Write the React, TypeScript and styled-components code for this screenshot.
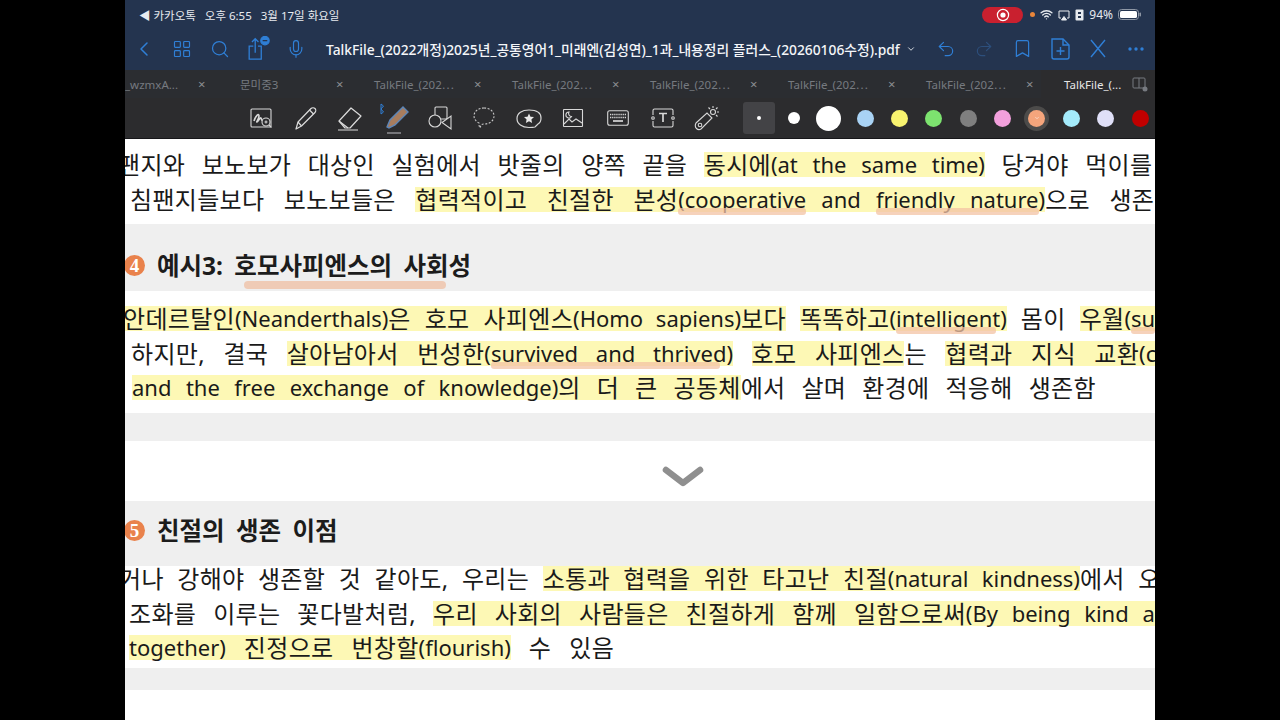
import React from "react";
import styled, { createGlobalStyle } from "styled-components";
import { ChevronLeft, LayoutGrid, Search, Mic, Undo2, Redo2, Bookmark, Wifi, ChevronDown } from "lucide-react";

const GlobalStyle = createGlobalStyle`
  html, body {
    margin: 0;
    background: #000;
    overflow: hidden;
  }
`;

const Page = styled.div`
  width: 1030px;
  height: 720px;
  margin-left: 125px;
  overflow: hidden;
  display: flex;
  flex-direction: column;
  background: #fff;
  font-family: "Noto Sans", "Noto Sans CJK KR", sans-serif;
`;

const Header = styled.div`
  height: 70px;
  background: #24344f;
  flex: none;
  color: #fff;
`;

const StatusBar = styled.div`
  height: 29px;
  display: flex;
  align-items: center;
  padding: 0 14px;
  font-size: 11.5px;
  color: #e8ebf0;
  gap: 9px;
`;

const StatusRight = styled.div`
  margin-left: auto;
  display: flex;
  align-items: center;
  gap: 5px;
  font-size: 12px;
`;

const RecPill = styled.div`
  width: 41px;
  height: 16px;
  border-radius: 8px;
  background: #c9202f;
  display: flex;
  align-items: center;
  justify-content: center;
  margin-right: 2px;
`;

const OrangeDot = styled.span`
  width: 5px;
  height: 5px;
  border-radius: 50%;
  background: #e8853a;
`;

const NavRow = styled.div`
  height: 39px;
  display: flex;
  align-items: center;
  color: #2f7fd6;
`;

const NavSlot = styled.div<{ $dim?: boolean }>`
  width: 38px;
  height: 38px;
  flex: none;
  display: flex;
  align-items: center;
  justify-content: center;
  color: ${(p) => (p.$dim ? "#2d4f7c" : "#2f7fd6")};
`;

const NavLeft = styled.div`
  display: flex;
  margin-right: 11px;
`;

const Title = styled.div`
  flex: none;
  width: 601px;
  color: #f4f6f9;
  font-size: 13.8px;
  font-weight: 500;
  white-space: nowrap;
  display: flex;
  align-items: center;
  gap: 6px;
  svg {
    flex: none;
  }
`;

const TabRow = styled.div`
  height: 28px;
  background: #2b2d31;
  display: flex;
  flex: none;
  overflow: hidden;
`;

const Tab = styled.div<{ $width: number; $inset?: number }>`
  width: ${(p) => p.$width}px;
  flex: none;
  display: flex;
  align-items: center;
  justify-content: space-between;
  padding: 0 5px 0 ${(p) => p.$inset ?? 23}px;
  box-sizing: border-box;
  font-size: 11.5px;
  color: #767a80;
  white-space: nowrap;
`;

const ActiveTab = styled.div`
  flex: 1;
  display: flex;
  align-items: center;
  background: #2c2c2e;
  font-size: 11.5px;
  color: #e6e6e6;
  padding-left: 23px;
  white-space: nowrap;
  gap: 11px;
`;

const CloseMark = styled.span`
  color: #8a8d92;
  font-size: 13px;
  width: 10px;
`;

const ToolBar = styled.div`
  height: 41px;
  background: #2c2c2e;
  border-bottom: 1px solid #17171a;
  box-sizing: border-box;
  display: flex;
  flex: none;
  align-items: center;
  padding-left: 114px;
`;

const ToolSlot = styled.div`
  width: 44.6px;
  flex: none;
  display: flex;
  align-items: center;
  justify-content: center;
`;

const ToolDivider = styled.div`
  width: 1px;
  height: 26px;
  background: #3a3a3d;
  margin: 0 12px 0 1px;
`;

const SelectedSlot = styled.div`
  width: 32px;
  height: 32px;
  border-radius: 3px;
  background: #434346;
  display: flex;
  flex: none;
  align-items: center;
  justify-content: center;
  margin-right: 2px;
`;

const SwatchSlot = styled.div<{ $after?: number }>`
  width: 34.4px;
  flex: none;
  display: flex;
  align-items: center;
  justify-content: center;
  margin-right: ${(p) => p.$after ?? 0}px;
`;

const Swatch = styled.span<{ $size: number; $color: string; $ring?: boolean }>`
  width: ${(p) => p.$size}px;
  height: ${(p) => p.$size}px;
  border-radius: 50%;
  background: ${(p) => p.$color};
  display: flex;
  align-items: center;
  justify-content: center;
  box-shadow: ${(p) => (p.$ring ? "0 0 0 4px #4c4b4a" : "none")};
`;

const Band = styled.div<{ $height: number }>`
  height: ${(p) => p.$height}px;
  flex: none;
  background: #efefef;
`;

const HeadingBand = styled(Band)<{ $top: number }>`
  padding-top: ${(p) => p.$top}px;
  box-sizing: border-box;
  display: flex;
  align-items: flex-start;
`;

const Badge = styled.span`
  width: 21px;
  height: 21px;
  border-radius: 50%;
  background: #e9824c;
  color: #fff;
  font-family: "Liberation Serif", serif;
  font-weight: 700;
  font-size: 19px;
  display: flex;
  align-items: center;
  justify-content: center;
  margin-left: -1px;
  margin-top: 3px;
  flex: none;
`;

const HeadingText = styled.div`
  margin-left: 12px;
  font-size: 24.5px;
  font-weight: 700;
  color: #1c1c1c;
  line-height: 28px;
  white-space: nowrap;
  word-spacing: 5px;
`;

const Section = styled.div<{ $height: number; $top: number }>`
  height: ${(p) => p.$height}px;
  box-sizing: border-box;
  flex: none;
  background: #fff;
  overflow: hidden;
  & > :first-child {
    margin-top: ${(p) => p.$top}px;
  }
`;

const ChevronSection = styled(Section)`
  display: flex;
  color: #8f8f8f;
  padding-left: 537px;
`;

const Latin = styled.span`
  font-size: 22px;
  letter-spacing: 0;
  vertical-align: 1px;
`;

const Line = styled.div<{ $indent: number; $spacing: number; $latin: number }>`
  height: 34.7px;
  line-height: 34.7px;
  margin-left: ${(p) => p.$indent}px;
  font-size: 24px;
  color: #1a1a1a;
  white-space: nowrap;
  word-spacing: ${(p) => p.$spacing}px;
  letter-spacing: 0.3px;
  ${Latin} {
    word-spacing: ${(p) => p.$latin}px;
  }
`;

const Mark = styled.span`
  background: linear-gradient(#fdf8b5, #fdf8b5) 0 50% / 100% 25px no-repeat;
  padding: 5px 0;
`;

const Underlined = styled.span<{ $trim?: number }>`
  position: relative;
  &::after {
    content: "";
    position: absolute;
    left: 0;
    right: ${(p) => p.$trim ?? 0}px;
    bottom: -1px;
    height: 7px;
    border-radius: 3px;
    background: #f3c3a4;
    opacity: 0.75;
  }
`;

const HeadingUnderlined = styled.span`
  position: relative;
  &::after {
    content: "";
    position: absolute;
    left: 10px;
    right: 25px;
    bottom: -7px;
    height: 8px;
    border-radius: 4px;
    background: #efc4ac;
    opacity: 0.85;
  }
`;

const InkIcon = () => (
  <svg width="24" height="24" viewBox="0 0 24 24" fill="none" stroke="#d8d8d8" strokeWidth="1.1">
    <rect x="2" y="3" width="20" height="18" rx="1" />
    <path d="M5 15c2-6 5-8 5-5s-3 6-2 6 3-5 4-4 0 3 2 2" strokeWidth="1.6" />
    <circle cx="17" cy="16" r="4" fill="#2c2c2e" />
    <path d="M17 14.5v3M15.5 16h3M20 19l2.5 2.5" />
  </svg>
);

const PencilIcon = () => (
  <svg width="26" height="26" viewBox="0 0 26 26" fill="none" stroke="#dcdcdc" strokeWidth="1.2" strokeLinejoin="round">
    <path d="M3 24l2-7L18 3.5c1-1 3-1 4 0s1 3 0 4L8.500 21z" />
    <path d="M5 17l3.500 4M16.500 5l4 4" />
  </svg>
);

const EraserIcon = () => (
  <svg width="28" height="26" viewBox="0 0 28 26" fill="none" stroke="#dcdcdc" strokeWidth="1.2" strokeLinejoin="round">
    <path d="M3 16L15 3l10 8-11 12H9z" />
    <path d="M3 16l9 7M2 25h20" />
  </svg>
);

const HighlighterIcon = () => (
  <svg width="32" height="32" viewBox="0 0 32 32" fill="none">
    <path d="M2 2l2.500 2L2 7V2zM2 12V7l2.500 3z" stroke="#2f7fd6" strokeWidth="1" />
    <path d="M8 25l3-7L24 5l5 5-13 13-6 3z" fill="#a87d5e" stroke="#5d86b8" strokeWidth="1.4" />
    <path d="M8 31h14" stroke="#8a8a8e" strokeWidth="1.6" />
  </svg>
);

const ShapesIcon = () => (
  <svg width="26" height="26" viewBox="0 0 26 26" fill="none" stroke="#d8d8d8" strokeWidth="1.1">
    <rect x="8" y="2" width="12" height="12" rx="1" />
    <circle cx="8" cy="16" r="6" fill="#2c2c2e" />
    <path d="M24 11v13l-9-6.500z" fill="#2c2c2e" />
  </svg>
);

const LassoIcon = () => (
  <svg width="24" height="24" viewBox="0 0 24 24" fill="none" stroke="#c8c8c8" strokeWidth="1.1" strokeDasharray="2 1.6">
    <path d="M12 2c6 0 10 3.500 10 8s-4 8-10 8c-1 0-2 0-3 1l-1 3c-1-2-1-3-1-5-3-1.500-5-4-5-7 0-4.500 4-8 10-8z" />
  </svg>
);

const StickerIcon = () => (
  <svg width="28" height="24" viewBox="0 0 28 24" fill="none" stroke="#d8d8d8" strokeWidth="1.2">
    <path d="M14 4c8 0 12 3 12 8 0 3-1 5-3 6l-3 3c-2 .5-4 .5-6 .5C7 21.500 2 18 2 12.500S7 4 14 4z" />
    <path d="M14 7.500l1.500 3.200 3.500.4-2.600 2.400.7 3.500-3.100-1.800-3.100 1.800.7-3.500L9 11.100l3.500-.4z" fill="#e8e8e8" stroke="none" />
  </svg>
);

const ImageIcon = () => (
  <svg width="22" height="20" viewBox="0 0 22 20" fill="none" stroke="#d8d8d8" strokeWidth="1.1">
    <rect x="1.500" y="1.500" width="19" height="17" rx="0.500" />
    <path d="M2 16l5-5 3 3 4-3 6 4" />
    <path d="M7 4a3 3 0 1 0 2.500 4.500A3 3 0 0 1 7 4z" />
  </svg>
);

const KeyboardIcon = () => (
  <svg width="22" height="16" viewBox="0 0 22 16" fill="none" stroke="#d8d8d8">
    <rect x="0.700" y="0.700" width="20.600" height="14.600" rx="2" strokeWidth="1.100" />
    <path d="M3 4.500h16M3 7.500h16" strokeWidth="1.700" strokeDasharray="1.300 .8" />
    <path d="M6 11h10" strokeWidth="1.700" />
  </svg>
);

const TextBoxIcon = () => (
  <svg width="24" height="20" viewBox="0 0 24 20" fill="none" stroke="#d8d8d8" strokeWidth="1.100">
    <path d="M2 7V2.500C2 1.500 2.500 1 3.500 1h17c1 0 1.500.5 1.500 1.500V7M2 13v4.500c0 1 .5 1.500 1.500 1.500h17c1 0 1.500-.5 1.500-1.500V13" />
    <circle cx="2" cy="10" r="1.300" />
    <circle cx="22" cy="10" r="1.300" />
    <path d="M8 5.500h8M12 5.500V14" strokeWidth="1.700" />
  </svg>
);

const LaserIcon = () => (
  <svg width="28" height="26" viewBox="0 0 28 26" fill="none" stroke="#d8d8d8" strokeWidth="1.100">
    <path d="M3 18L14 8l5 5L8 24c-1.500 1-3 1-4.500-.5S2 20 3 18z" />
    <circle cx="7" cy="20" r="1.800" />
    <circle cx="20" cy="7" r="2.500" />
    <path d="M20 1v2M26 7h-2M24.500 2.500L23 4M24.500 11.500L23 10M15.500 2.500L17 4" />
  </svg>
);

const ShareIcon = () => (
  <svg width="26" height="26" viewBox="0 0 28 28" fill="none" stroke="#2f7fd6" strokeWidth="1.400">
    <path d="M9 11H4.500v14h13V11H14" />
    <path d="M11 18V3M7.500 6.500L11 3l3.500 3.500" />
    <circle cx="21.500" cy="5" r="4.500" fill="#2f7fd6" />
    <path d="M19 5h5" stroke="#24344f" />
  </svg>
);

const PagePlusIcon = () => (
  <svg width="24" height="24" viewBox="0 0 24 24" fill="none" stroke="#2f7fd6" strokeWidth="1.400">
    <path d="M4 2h11l6 6v12c0 1-.8 2-2 2H6c-1 0-2-1-2-2V2z" />
    <path d="M15 2v6h6M12.500 10v8M8.500 14h8" />
  </svg>
);

const CrossIcon = () => (
  <svg width="20" height="20" viewBox="0 0 20 20" fill="none" stroke="#2f7fd6" strokeWidth="1.400">
    <path d="M3 1l14 17M17 1L3 18" />
  </svg>
);

const DotsIcon = () => (
  <svg width="18" height="6" viewBox="0 0 18 6" fill="#2f7fd6">
    <circle cx="3" cy="3" r="1.700" />
    <circle cx="9" cy="3" r="1.700" />
    <circle cx="15" cy="3" r="1.700" />
  </svg>
);

const RecIcon = () => (
  <svg width="14" height="14" viewBox="0 0 14 14" fill="none">
    <circle cx="7" cy="7" r="5.600" stroke="#fff" strokeWidth="1.200" />
    <circle cx="7" cy="7" r="2.600" fill="#fff" />
  </svg>
);

const AirplayIcon = () => (
  <svg width="12" height="12" viewBox="0 0 12 12" fill="none" stroke="#e8ebf0" strokeWidth="1">
    <path d="M3 9H1V2h10v7H9" />
    <path d="M3.500 11L6 7.500 8.500 11z" fill="#e8ebf0" />
  </svg>
);

const RotationLockIcon = () => (
  <svg width="9" height="12" viewBox="0 0 9 12" fill="#e8ebf0">
    <rect x="0.500" y="0.500" width="8" height="11" rx="1" />
    <rect x="3" y="3" width="3" height="2" fill="#24344f" />
    <rect x="3" y="7" width="3" height="2" fill="#24344f" />
  </svg>
);

const BatteryIcon = () => (
  <svg width="23" height="11" viewBox="0 0 23 11" fill="none">
    <rect x="0.500" y="0.500" width="20" height="10" rx="3" stroke="#8e97a5" />
    <rect x="2" y="2" width="17" height="7" rx="1.600" fill="#fff" />
    <rect x="21.500" y="3.500" width="1.500" height="4" rx="0.700" fill="#8e97a5" />
  </svg>
);

const SplitViewIcon = () => (
  <svg width="16" height="15" viewBox="0 0 16 15" fill="none" stroke="#777a80">
    <rect x="1" y="1" width="12" height="10" rx="1" />
    <path d="M7 1v10" />
    <circle cx="13" cy="12" r="2.500" fill="#777a80" stroke="none" />
  </svg>
);

const otherTabs = ["TalkFile_(202⋯", "TalkFile_(202⋯", "TalkFile_(202⋯", "TalkFile_(202⋯", "TalkFile_(202⋯"];

const swatches = [
  { size: 12, color: "#ffffff" },
  { size: 25, color: "#ffffff", after: 2.500 },
  { size: 17, color: "#a9d3f5" },
  { size: 17, color: "#f8f36f" },
  { size: 17, color: "#7de36f" },
  { size: 17, color: "#7f7f7f" },
  { size: 17, color: "#f2a0dc" },
  { size: 17, color: "#f5a57c", ring: true },
  { size: 17, color: "#a4ebfb" },
  { size: 17, color: "#e0e0f8" },
  { size: 17, color: "#c00000" },
];

const App = () => {
  return (
    <Page>
      <GlobalStyle />
      <Header>
        <StatusBar>
          <span>◀ 카카오톡</span>
          <span>오후 6:55</span>
          <span>3월 17일 화요일</span>
          <StatusRight>
            <RecPill>
              <RecIcon />
            </RecPill>
            <OrangeDot />
            <Wifi size={13} strokeWidth={2.5} />
            <AirplayIcon />
            <RotationLockIcon />
            <span>94%</span>
            <BatteryIcon />
          </StatusRight>
        </StatusBar>
        <NavRow>
          <NavLeft>
            <NavSlot>
              <ChevronLeft size={24} strokeWidth={1.5} />
            </NavSlot>
            <NavSlot>
              <LayoutGrid size={20} strokeWidth={1.4} />
            </NavSlot>
            <NavSlot>
              <Search size={20} strokeWidth={1.5} />
            </NavSlot>
            <NavSlot>
              <ShareIcon />
            </NavSlot>
            <NavSlot>
              <Mic size={20} strokeWidth={1.4} />
            </NavSlot>
          </NavLeft>
          <Title>
            TalkFile_(2022개정)2025년_공통영어1_미래엔(김성연)_1과_내용정리 플러스_(20260106수정).pdf
            <ChevronDown size={10} />
          </Title>
          <NavSlot>
            <Undo2 size={20} strokeWidth={1.4} />
          </NavSlot>
          <NavSlot $dim>
            <Redo2 size={20} strokeWidth={1.4} />
          </NavSlot>
          <NavSlot>
            <Bookmark size={21} strokeWidth={1.4} />
          </NavSlot>
          <NavSlot>
            <PagePlusIcon />
          </NavSlot>
          <NavSlot>
            <CrossIcon />
          </NavSlot>
          <NavSlot>
            <DotsIcon />
          </NavSlot>
        </NavRow>
      </Header>
      <TabRow>
        <Tab $width={88} $inset={0}>
          <span>_wzmxA...</span>
          <CloseMark>×</CloseMark>
        </Tab>
        <Tab $width={138} $inset={27}>
          <span>문미중3</span>
          <CloseMark>×</CloseMark>
        </Tab>
        {otherTabs.map((label, i) => (
          <Tab $width={138} key={i}>
            <span>{label}</span>
            <CloseMark>×</CloseMark>
          </Tab>
        ))}
        <ActiveTab>
          <span>TalkFile_(...</span>
          <SplitViewIcon />
        </ActiveTab>
      </TabRow>
      <ToolBar>
        <ToolSlot><InkIcon /></ToolSlot>
        <ToolSlot><PencilIcon /></ToolSlot>
        <ToolSlot><EraserIcon /></ToolSlot>
        <ToolSlot><HighlighterIcon /></ToolSlot>
        <ToolSlot><ShapesIcon /></ToolSlot>
        <ToolSlot><LassoIcon /></ToolSlot>
        <ToolSlot><StickerIcon /></ToolSlot>
        <ToolSlot><ImageIcon /></ToolSlot>
        <ToolSlot><KeyboardIcon /></ToolSlot>
        <ToolSlot><TextBoxIcon /></ToolSlot>
        <ToolSlot><LaserIcon /></ToolSlot>
        <ToolDivider />
        <SelectedSlot>
          <Swatch $size={4} $color="#ffffff" />
        </SelectedSlot>
        {swatches.map((s, i) => (
          <SwatchSlot key={i} $after={s.after}>
            <Swatch $size={s.size} $color={s.color} $ring={s.ring}>
              {s.ring ? <ChevronDown size={6} color="#fff" /> : null}
            </Swatch>
          </SwatchSlot>
        ))}
      </ToolBar>

      <Section $height={85} $top={8}>
        <Line $indent={-7} $spacing={10} $latin={9}>
          팬지와 보노보가 대상인 실험에서 밧줄의 양쪽 끝을 <Mark>동시에<Latin>(at the same time)</Latin></Mark> 당겨야 먹이를
        </Line>
        <Line $indent={5} $spacing={13} $latin={9.500}>
          침팬지들보다 보노보들은 <Mark>협력적이고 친절한 본성<Latin><Underlined>(cooperative</Underlined> and <Underlined>friendly nature</Underlined>)</Latin></Mark>으로 생존
        </Line>
      </Section>
      <HeadingBand $height={67} $top={28}>
        <Badge>4</Badge>
        <HeadingText>
          예시3: <HeadingUnderlined>호모사피엔스의 사회성</HeadingUnderlined>
        </HeadingText>
      </HeadingBand>
      <Section $height={122} $top={10}>
        <Line $indent={-2} $spacing={7.500} $latin={7}>
          <Mark>안데르탈인<Latin>(Neanderthals)</Latin>은 호모 사피엔스<Latin>(Homo sapiens)</Latin>보다</Mark> <Mark>똑똑하고<Latin>(<Underlined $trim={4}>intelligent</Underlined>)</Latin></Mark> 몸이 <Mark>우월<Latin>(<Underlined>su</Underlined></Latin></Mark>
        </Line>
        <Line $indent={6} $spacing={12} $latin={12}>
          하지만, 결국 <Mark>살아남아서 번성한<Latin>(<Underlined $trim={6}>survived and thrived</Underlined>)</Latin></Mark> <Mark>호모 사피엔스</Mark>는 <Mark>협력과 지식 교환<Latin>(c</Latin></Mark>
        </Line>
        <Line $indent={7} $spacing={9.500} $latin={8.700}>
          <Mark><Latin>and the free exchange of knowledge)</Latin>의 더 큰 공동체</Mark>에서 살며 환경에 적응해 생존함
        </Line>
      </Section>
      <Band $height={28} />
      <ChevronSection $height={60} $top={25}>
        <svg width="42" height="22" viewBox="0 0 42 22" fill="none" stroke="currentColor" strokeWidth="6.5" strokeLinecap="round" strokeLinejoin="round">
          <path d="M4 4l17 13L38 4" />
        </svg>
      </ChevronSection>
      <HeadingBand $height={65} $top={16}>
        <Badge>5</Badge>
        <HeadingText>친절의 생존 이점</HeadingText>
      </HeadingBand>
      <Section $height={102} $top={-5}>
        <Line $indent={-6} $spacing={7} $latin={7.500}>
          거나 강해야 생존할 것 같아도, 우리는 <Mark>소통과 협력을 위한 타고난 친절<Latin>(natural kindness)</Latin></Mark>에서 오
        </Line>
        <Line $indent={4} $spacing={10.500} $latin={8}>
          조화를 이루는 꽃다발처럼, <Mark>우리 사회의 사람들은 친절하게 함께 일함으로써<Latin>(By being kind a</Latin></Mark>
        </Line>
        <Line $indent={4} $spacing={11.500} $latin={8}>
          <Mark><Latin>together)</Latin> 진정으로 번창할<Latin>(flourish)</Latin></Mark> 수 있음
        </Line>
      </Section>
      <Band $height={22} />
    </Page>
  );
};

export default App;
